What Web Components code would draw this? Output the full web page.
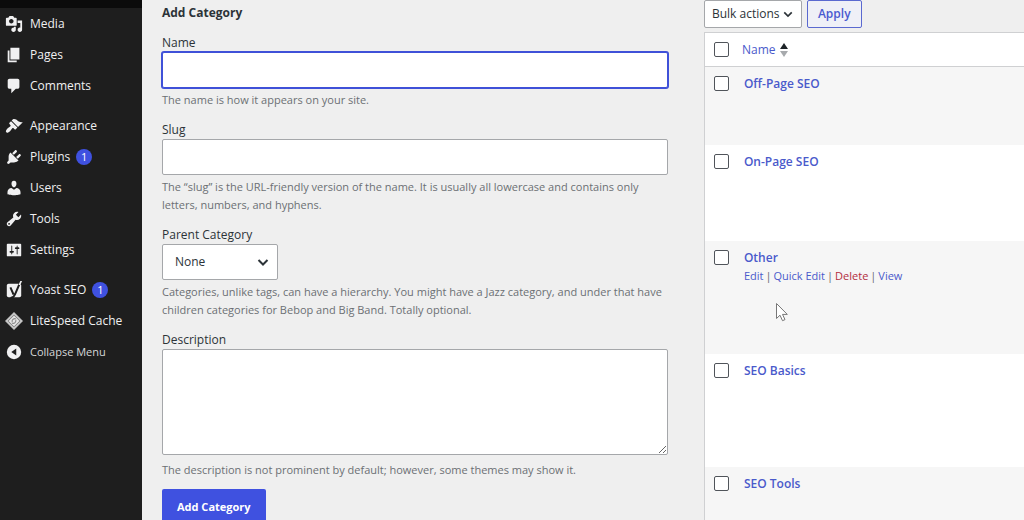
<!DOCTYPE html>
<html lang="en">
<head>
<meta charset="utf-8">
<meta name="viewport" content="width=device-width, initial-scale=1">
<title>Categories</title>
<style>
    html, body { height: 100%; }
    body { margin: 0; overflow: hidden; background: #efefef; color: #3c434a; font: 12px/18px "Open Sans", "Noto Sans", sans-serif; }
</style>
</head>
<body>
<admin-page>
    <admin-menu slot="menu">
        <menu-item icon="media">Media</menu-item>
        <menu-item icon="page">Pages</menu-item>
        <menu-item icon="comments">Comments</menu-item>
        <menu-item icon="appearance" first>Appearance</menu-item>
        <menu-item icon="plugins" count="1">Plugins</menu-item>
        <menu-item icon="users">Users</menu-item>
        <menu-item icon="tools">Tools</menu-item>
        <menu-item icon="settings">Settings</menu-item>
        <menu-item icon="yoast" count="1" first>Yoast SEO</menu-item>
        <menu-item icon="litespeed">LiteSpeed Cache</menu-item>
        <menu-item icon="collapse" action>Collapse Menu</menu-item>
    </admin-menu>
    <category-form slot="form">
        <form-field label="Name" type="text" active>The name is how it appears on your site.</form-field>
        <form-field label="Slug" type="text">The “slug” is the URL-friendly version of the name. It is usually all lowercase and contains only letters, numbers, and hyphens.</form-field>
        <form-field label="Parent Category" type="select" options="None">Categories, unlike tags, can have a hierarchy. You might have a Jazz category, and under that have children categories for Bebop and Big Band. Totally optional.</form-field>
        <form-field label="Description" type="textarea">The description is not prominent by default; however, some themes may show it.</form-field>
    </category-form>
    <category-list slot="list"></category-list>
</admin-page>
<mouse-pointer></mouse-pointer>

<script>
const ICONS = {
    media: '<path d="M13 11V4c0-.55-.45-1-1-1h-1.67L9 1H5L3.67 3H2c-.55 0-1 .45-1 1v7c0 .55.45 1 1 1h10c.55 0 1-.45 1-1zM7 4.5c1.38 0 2.5 1.12 2.5 2.5S8.38 9.5 7 9.5 4.5 8.38 4.5 7 5.62 4.5 7 4.5zM14 6h5v10.5c0 1.38-1.12 2.5-2.5 2.5S14 17.88 14 16.5s1.12-2.5 2.5-2.5c.17 0 .34.02.5.05V9h-3V6zm-4 8.05V13h2v3.5c0 1.38-1.12 2.5-2.5 2.5S7 17.88 7 16.5 8.12 14 9.5 14c.17 0 .34.02.5.05z"/>',
    page: '<path d="M6 15V2h10v13H6zm-1 1h8v2H3V5h2v11z"/>',
    comments: '<path d="M5 2h9c1.1 0 2 .9 2 2v7c0 1.1-.9 2-2 2h-2l-5 5v-5H5c-1.1 0-2-.9-2-2V4c0-1.1.9-2 2-2z"/>',
    appearance: '<path d="M14.48 11.06L7.41 3.99l1.5-1.5c.5-.56 2.3-.47 3.51.32 1.21.8 1.43 1.28 2.91 2.1 1.18.64 2.45 1.26 4.45.85zm-.71.71L6.7 4.7 4.93 6.47c-.39.39-.39 1.02 0 1.41l1.06 1.06c.39.39.39 1.03 0 1.42-.6.6-1.43 1.11-2.21 1.69-.35.26-.7.53-1.01.84C1.43 14.23.4 16.08 1.4 17.07c.99 1 2.84-.03 4.18-1.36.31-.31.58-.66.85-1.02.57-.78 1.08-1.61 1.69-2.21.39-.39 1.02-.39 1.41 0l1.06 1.06c.39.39 1.02.39 1.41 0z"/>',
    plugins: '<path d="M13.11 4.36L9.87 7.6 8 5.73l3.24-3.24c.35-.34 1.05-.2 1.56.32.52.51.66 1.21.31 1.55zm-8 1.77l.91-1.12 9.01 9.01-1.19.84c-.71.71-2.63 1.16-3.82 1.16H6.14L4.9 17.26c-.59.59-1.54.59-2.12 0-.59-.58-.59-1.53 0-2.12l1.24-1.24v-3.88c0-1.13.4-3.19 1.09-3.89zm7.26 3.97l3.24-3.24c.34-.35 1.04-.21 1.55.31.52.51.66 1.21.31 1.55l-3.24 3.25z"/>',
    users: '<path d="M10 9.25c-2.27 0-2.73-3.44-2.73-3.44C7 4.02 7.82 2 9.97 2c2.16 0 2.98 2.02 2.71 3.81 0 0-.41 3.44-2.68 3.44zm0 2.57L12.72 10c2.39 0 4.52 2.33 4.52 4.53v2.49s-3.65 1.13-7.24 1.13c-3.65 0-7.24-1.13-7.24-1.13v-2.49c0-2.25 1.94-4.48 4.47-4.48z"/>',
    tools: '<path d="M16.68 9.77c-1.34 1.34-3.3 1.67-4.95.99l-5.41 6.52c-.99.99-2.59.99-3.58 0s-.99-2.59 0-3.57l6.52-5.42c-.68-1.65-.35-3.61.99-4.95 1.28-1.28 3.12-1.62 4.72-1.06l-2.89 2.89 2.82 2.82 2.86-2.87c.53 1.58.18 3.39-1.08 4.65zM3.81 16.21c.4.39 1.04.39 1.43 0 .4-.4.4-1.04 0-1.43-.39-.4-1.03-.4-1.43 0-.39.39-.39 1.03 0 1.43z"/>',
    settings: '<path d="M18 16V4c0-.55-.45-1-1-1H3c-.55 0-1 .45-1 1v12c0 .55.45 1 1 1h14c.55 0 1-.45 1-1zM8 11h1c.55 0 1 .45 1 1s-.45 1-1 1H8v1.5c0 .28-.22.5-.5.5s-.5-.22-.5-.5V13H6c-.55 0-1-.45-1-1s.45-1 1-1h1V5.5c0-.28.22-.5.5-.5s.5.22.5.5V11zm5-2h-1c-.55 0-1-.45-1-1s.45-1 1-1h1V5.5c0-.28.22-.5.5-.5s.5.22.5.5V7h1c.55 0 1 .45 1 1s-.45 1-1 1h-1v5.5c0 .28-.22.5-.5.5s-.5-.22-.5-.5V9z"/>',
    yoast: '<rect x="2" y="3" width="16" height="15" rx="2"/><path d="M6 7l3.500 8M17.500 0L11 15q-1.500 4-5 4" fill="none" stroke="#1e1e1e" stroke-width="2.200"/><path d="M17 0h2l-2 4.500h-2z"/>',
    litespeed: '<path d="M10 0l10 10-10 10L0 10z" fill="#c4c4c4"/><path d="M10 3.500l6.500 6.500-6.500 6.500L3.500 10z" fill="#e6e6e6" stroke="#777"/><path d="M12 7.500a3.200 3.200 0 0 0-4 4M8 12.500a3.200 3.200 0 0 0 4-4" fill="none" stroke="#888" stroke-width="1.200"/>',
    collapse: '<circle cx="10" cy="10" r="8"/><path d="M12.500 6v8L7 10z" fill="#1e1e1e"/>'
};

const CHEVRON = '<svg class="chevron" width="12" height="12" viewBox="0 0 12 12" aria-hidden="true"><path d="M1.500 4L6 8.500 10.500 4" fill="none" stroke="#2c3338" stroke-width="2"/></svg>';

// page shell: menu on the left, form and list side by side
class AdminPage extends HTMLElement {
    constructor() {
        super();
        this.attachShadow({ mode: 'open' });
    }

    connectedCallback() {
        this.shadowRoot.innerHTML = `
        <style>
            :host { display: flex; height: 100%; }
            main { flex: 1; min-width: 0; display: grid; grid-template-columns: 49fr 31fr; column-gap: 36px; padding-left: 20px; }
        </style>
        <slot name="menu"></slot>
        <main>
            <slot name="form"></slot>
            <slot name="list"></slot>
        </main>
        `;
    }
}

class AdminMenu extends HTMLElement {
    constructor() {
        super();
        this.attachShadow({ mode: 'open' });
    }

    connectedCallback() {
        this.shadowRoot.innerHTML = `
        <style>
            :host { display: block; flex: none; width: 142px; background: #1e1e1e; border-top: 8px solid #0b0b0b; box-sizing: border-box; }
        </style>
        <nav aria-label="Main menu"><slot></slot></nav>
        `;
    }
}

class MenuItem extends HTMLElement {
    constructor() {
        super();
        this.attachShadow({ mode: 'open' });
    }

    connectedCallback() {
        const tag = this.hasAttribute('action') ? 'button type="button"' : 'a href="#"';
        const end = this.hasAttribute('action') ? 'button' : 'a';
        const count = this.getAttribute('count');
        this.shadowRoot.innerHTML = `
        <style>
            :host { display: block; }
            :host([first]) { margin-top: 9px; }
            a, button { display: flex; align-items: center; width: 100%; height: 31px; padding: 0 0 0 5px; box-sizing: border-box; border: 0; background: none; color: #f0f0f1; font: inherit; text-decoration: none; cursor: pointer; }
            button { color: #d5d7d9; font-size: 11px; }
            svg { flex: none; margin-right: 7px; fill: #f0f0f1; }
            .count { margin-left: 6px; width: 16px; border-radius: 8px; background: #3f51e0; color: #fff; font-size: 11px; line-height: 16px; text-align: center; }
        </style>
        <${tag}>
            <svg width="18" height="18" viewBox="0 0 20 20" aria-hidden="true">${ICONS[this.getAttribute('icon')]}</svg>
            <slot></slot>
            ${count ? `<span class="count">${count}</span>` : ''}
        </${end}>
        `;
    }
}

class CategoryForm extends HTMLElement {
    constructor() {
        super();
        this.attachShadow({ mode: 'open' });
    }

    connectedCallback() {
        this.shadowRoot.innerHTML = `
        <style>
            :host { display: block; min-width: 0; padding-top: 4px; }
            h2 { margin: 0 0 12px; color: #2c3338; font-size: 12px; line-height: 18px; font-weight: 700; }
            button { height: 36px; margin-top: 10px; padding: 0 15px; border: 0; border-radius: 2px; background: #3f51e0; color: #fff; font: inherit; font-size: 11px; font-weight: 700; cursor: pointer; }
        </style>
        <h2>Add Category</h2>
        <form>
            <slot></slot>
            <button type="button">Add Category</button>
        </form>
        `;
    }
}

class FormField extends HTMLElement {
    constructor() {
        super();
        this.attachShadow({ mode: 'open' });
    }

    control() {
        const type = this.getAttribute('type');
        if (type === 'select') {
            const options = this.getAttribute('options').split(',').map(o => `<option>${o}</option>`).join('');
            return `<div class="select"><select id="control">${options}</select>${CHEVRON}</div>`;
        }
        if (type === 'textarea') {
            return '<textarea id="control"></textarea>';
        }
        return '<input type="text" id="control">';
    }

    connectedCallback() {
        this.shadowRoot.innerHTML = `
        <style>
            :host { display: block; margin-bottom: 12px; }
            :host([type="textarea"]) { margin-bottom: 0; }
            label { display: block; color: #2c3338; }
            input, textarea, select { display: block; width: 100%; box-sizing: border-box; margin: 0; border: 1px solid #a5a7aa; border-radius: 2px; background: #fff; color: #2c3338; font: inherit; outline: none; }
            input, select { height: 36px; padding: 0 12px; }
            textarea { height: 106px; padding: 6px 8px; }
            :host([active]) input { border-color: #3f51d8; box-shadow: 0 0 0 1px #3f51d8; }
            .select { display: inline-grid; align-items: center; width: 116px; vertical-align: top; }
            .select > * { grid-area: 1 / 1; }
            select { appearance: none; }
            .chevron { justify-self: end; margin-right: 9px; pointer-events: none; }
            p { margin: 3px 0 0; color: #6c6f74; font-size: 11px; }
            :host([type="textarea"]) p { margin-top: 6px; }
        </style>
        <label for="control">${this.getAttribute('label')}</label>
        ${this.control()}
        <p><slot></slot></p>
        `;
    }
}

class CategoryList extends HTMLElement {
    constructor() {
        super();
        this.attachShadow({ mode: 'open' });
        this.rows = [
            { name: 'Off-Page SEO', height: 78 },
            { name: 'On-Page SEO', height: 96 },
            { name: 'Other', height: 113, open: true },
            { name: 'SEO Basics', height: 113 },
            { name: 'SEO Tools', height: 96 }
        ];
    }

    connectedCallback() {
        this.render();
    }

    row(item) {
        const actions = `
            <div class="actions"><a href="#">Edit</a> | <a href="#">Quick Edit</a> | <a href="#" class="delete">Delete</a> | <a href="#">View</a></div>`;
        return `
        <tr style="height: ${item.height}px">
            <td class="check"><input type="checkbox" aria-label="Select ${item.name}"></td>
            <td><a class="title" href="#">${item.name}</a>${item.open ? actions : ''}</td>
        </tr>`;
    }

    render() {
        this.shadowRoot.innerHTML = `
        <style>
            :host { display: block; min-width: 0; }
            .bulk { display: flex; gap: 5px; height: 28px; margin-bottom: 4px; }
            .select { display: grid; align-items: center; width: 98px; }
            .select > * { grid-area: 1 / 1; }
            select, button { height: 28px; box-sizing: border-box; margin: 0; border: 1px solid #a5a7aa; border-radius: 2px; background: #fff; color: #2c3338; font: inherit; }
            select { appearance: none; width: 100%; padding: 0 0 0 7px; }
            .chevron { justify-self: end; margin-right: 9px; pointer-events: none; }
            .bulk .chevron { width: 10px; }
            button { padding: 0 10px; border-color: #5a69d0; background: #eff0f7; color: #4a5ad0; font-weight: 600; cursor: pointer; }
            table { width: 100%; border-collapse: separate; border-spacing: 0; border: 1px solid #cfd0d2; border-right: 0; background: #fff; }
            th, td { padding: 8px 0 0; text-align: left; vertical-align: top; font-weight: 400; }
            th { padding-bottom: 7px; border-bottom: 1px solid #cfd0d2; }
            tbody tr:nth-child(odd) { background: #f6f6f6; }
            .check { width: 39px; padding-left: 9px; box-sizing: border-box; }
            input { appearance: none; display: block; width: 15px; height: 15px; box-sizing: border-box; margin: 1px 0 0; border: 1px solid #50545a; border-radius: 2px; background: #fff; }
            a { color: #4a5acb; text-decoration: none; }
            .title { font-weight: 600; }
            .sort { display: inline-flex; align-items: center; gap: 5px; margin-left: -2px; }
            .actions { display: flex; gap: 2px; color: #646970; font-size: 11px; }
            .delete { color: #b32d3e; }
        </style>
        <div class="bulk">
            <div class="select">
                <select aria-label="Bulk actions"><option>Bulk actions</option></select>
                ${CHEVRON}
            </div>
            <button type="button">Apply</button>
        </div>
        <table>
            <thead>
                <tr>
                    <th class="check"><input type="checkbox" aria-label="Select all"></th>
                    <th><a class="sort" href="#">Name <svg width="8" height="14" viewBox="0 0 8 14" aria-hidden="true"><path d="M0 6l4-6 4 6z" fill="#1d2327"/><path d="M0 8l4 6 4-6z" fill="#a7aaad"/></svg></a></th>
                </tr>
            </thead>
            <tbody>${this.rows.map(item => this.row(item)).join('')}</tbody>
        </table>
        `;
    }
}

class MousePointer extends HTMLElement {
    constructor() {
        super();
        this.attachShadow({ mode: 'open' });
    }

    connectedCallback() {
        this.shadowRoot.innerHTML = `
        <style>
            :host { position: absolute; left: 776px; top: 303px; pointer-events: none; }
            svg { display: block; }
        </style>
        <svg width="12" height="19" viewBox="0 0 12 19" aria-hidden="true"><path d="M.5.5v15l3.500-3.300 2.500 5.500 2.500-1.100-2.500-5.200h4.800z" fill="#fff" stroke="#777"/></svg>
        `;
    }
}

customElements.define('admin-page', AdminPage);
customElements.define('admin-menu', AdminMenu);
customElements.define('menu-item', MenuItem);
customElements.define('category-form', CategoryForm);
customElements.define('form-field', FormField);
customElements.define('category-list', CategoryList);
customElements.define('mouse-pointer', MousePointer);
</script>
</body>
</html>
